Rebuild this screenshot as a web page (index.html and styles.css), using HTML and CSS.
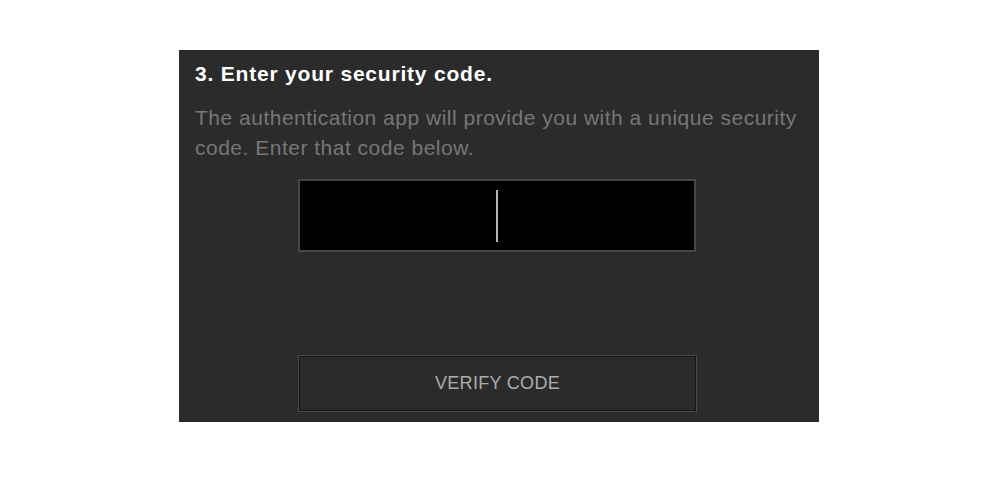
FILE: index.html
```html
<!DOCTYPE html>
<html>
<head>
<meta charset="utf-8">
<link rel="stylesheet" href="styles.css">
</head>
<body>
<div class="panel">
  <h2 class="title">3. Enter your security code.</h2>
  <p class="desc">The authentication app will provide you with a unique security code. Enter that code below.</p>
  <div class="form">
    <div class="code-input"><span class="caret"></span></div>
    <button class="verify">VERIFY CODE</button>
  </div>
</div>
</body>
</html>
```
FILE: styles.css
```css
html, body {
  margin: 0;
  padding: 0;
  background: #ffffff;
}
body {
  font-family: "Liberation Sans", Arial, sans-serif;
}
.panel {
  box-sizing: border-box;
  width: 640px;
  height: 372px;
  margin: 50px 0 0 179px;
  padding: 12px 0 0 16px;
  background: #2b2b2b;
}
.title {
  margin: 0;
  font-size: 21px;
  line-height: 24px;
  font-weight: bold;
  color: #ffffff;
  letter-spacing: 0.8px;
}
.desc {
  margin: 17px 0 0 0;
  width: 620px;
  font-size: 21px;
  line-height: 30px;
  color: #777777;
  letter-spacing: 0.5px;
}
.form {
  display: flex;
  flex-direction: column;
  margin: 16px 0 0 103px;
}
.code-input {
  box-sizing: border-box;
  width: 398px;
  height: 73px;
  background: #000000;
  border: 2px solid #474747;
  display: flex;
  align-items: center;
  justify-content: center;
}
.caret {
  display: block;
  width: 2px;
  height: 52px;
  background: #b5b5b5;
}
.verify {
  box-sizing: border-box;
  margin-top: 103px;
  width: 399px;
  height: 57px;
  background: #2b2b2b;
  border: 1px solid #4a4a4a;
  box-shadow: inset 0 0 0 1px #141414;
  color: #adadad;
  font-family: "Liberation Sans", Arial, sans-serif;
  font-size: 18px;
  letter-spacing: 0.3px;
  padding: 0;
}
```
